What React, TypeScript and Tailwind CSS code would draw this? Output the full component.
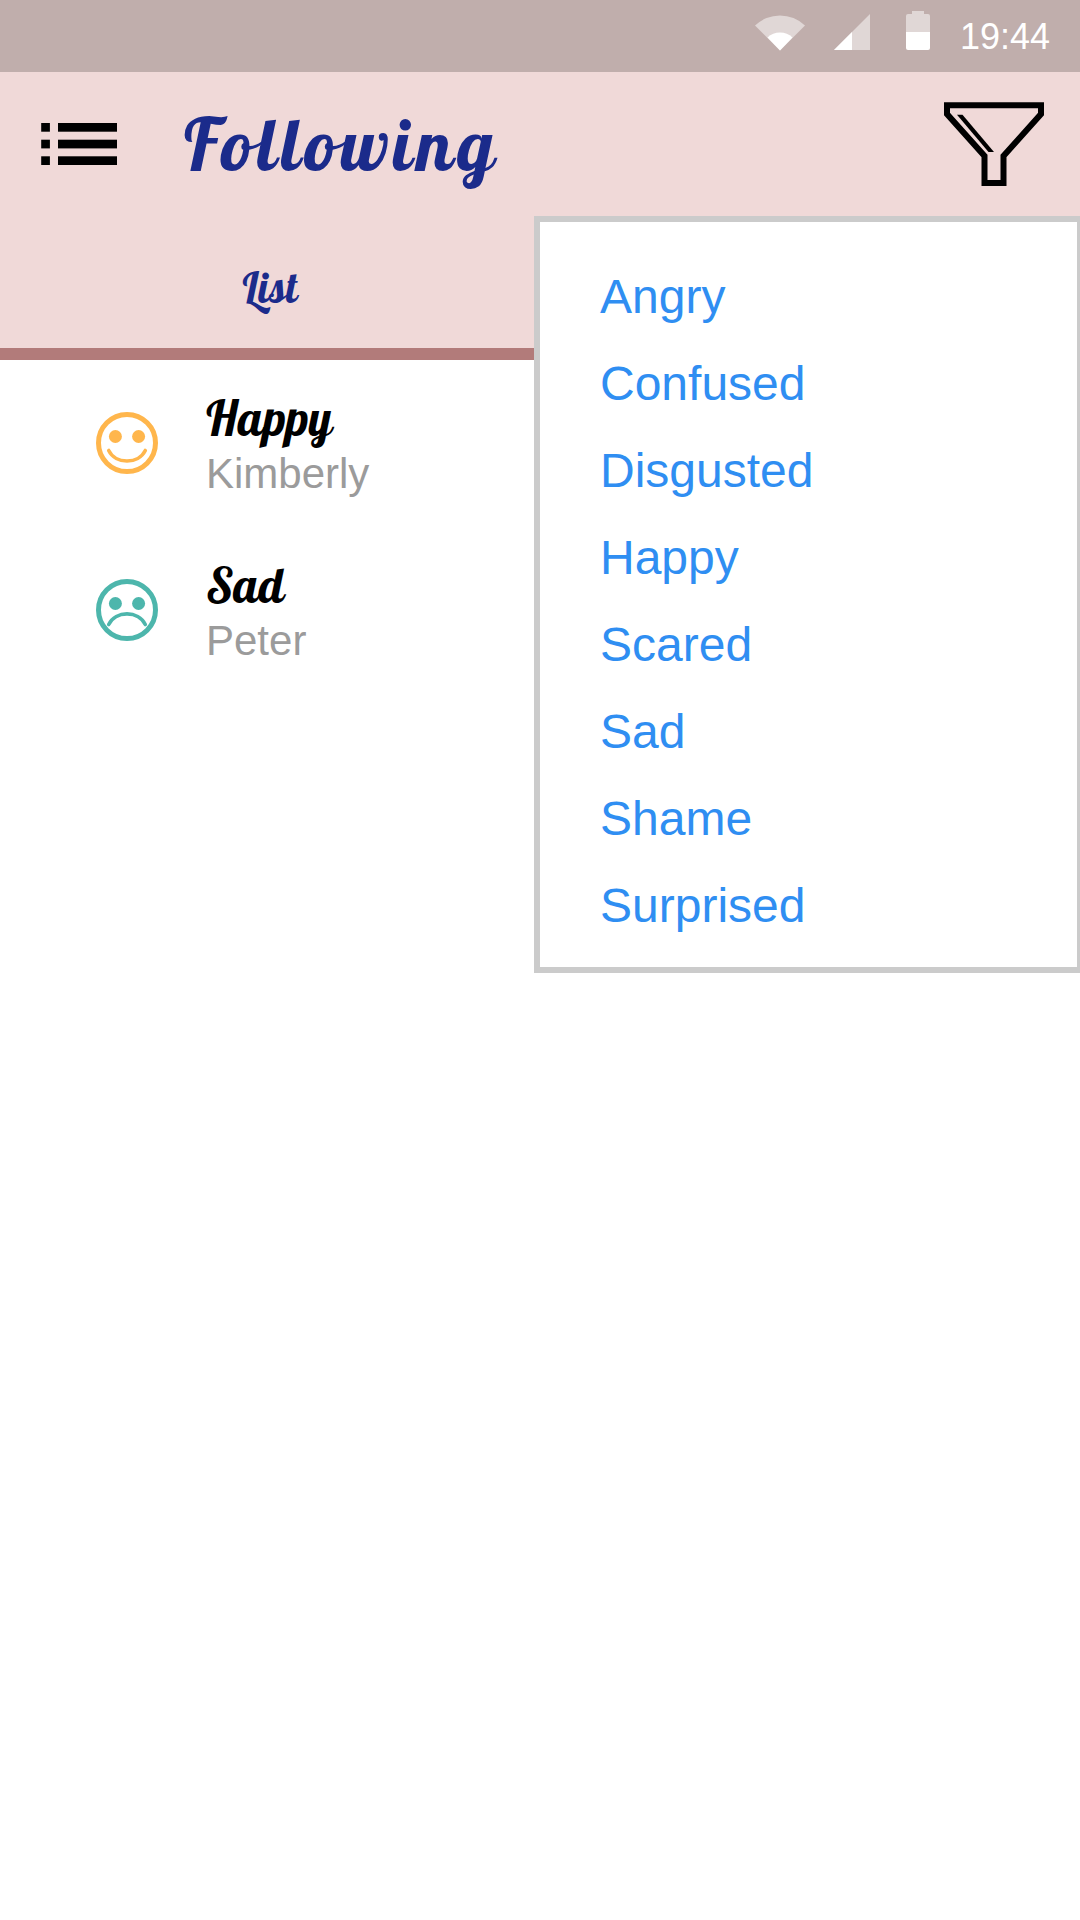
const SANS = "font-['Liberation_Sans',Arial,sans-serif]";
const SCRIPT = "font-[Lobster,'Liberation_Serif',serif] font-normal";

function StatusBar() {
  return (
    <div className="flex h-[72px] items-start bg-[#c0aeac] pl-[755px] text-white">
      <svg className="mt-[11px] h-[40px] w-[176px] shrink-0" viewBox="755 11 176 40" fill="#fff">
        <path d="M755 25.500A36 36 0 0 1 805 25.500L780 50.500z" opacity=".5" />
        <path d="M767.500 37.500A18 18 0 0 1 792.500 37.500L780 50.500z" />
        <path d="M834 50L870 14V50z" opacity=".5" />
        <path d="M834 50L852 32V50z" />
        <path d="M906 32V16q0-2 2-2h4v-3h12v3h4q2 0 2 2v16z" opacity=".5" />
        <path d="M906 32h24v16q0 2-2 2h-20q-2 0-2-2z" />
      </svg>
      <span className="ml-[29px] mt-[17px] text-[36px] leading-[40px]">19:44</span>
    </div>
  );
}

function ListIcon() {
  return (
    <svg className="h-[42px] w-[77px]" viewBox="41 123 77 42">
      {[123, 139.7, 156.3].map((y) => (
        <g key={y}>
          <rect x="41.200" y={y} width="8.700" height="8.700" />
          <rect x="58" y={y} width="59" height="8.700" />
        </g>
      ))}
    </svg>
  );
}

function FunnelIcon() {
  return (
    <svg className="h-[84px] w-[100px]" viewBox="944 102 100 84">
      <path
        d="M947 105.300H1041V114L1003.500 156V183H984.500V156L947 114z"
        fill="none"
        stroke="#000"
        strokeWidth="6"
      />
      <path d="M957 114.700h5.500L994 152h-5.500z" />
    </svg>
  );
}

function Face({ happy }: { happy: boolean }) {
  const color = happy ? "#ffb64c" : "#4db6ac";
  return (
    <svg className="mb-px h-[62px] w-[62px] shrink-0" viewBox="-31 -31 62 62" fill="none" stroke={color}>
      <circle r="28.500" strokeWidth="5" />
      <circle cx="-11.600" cy="-6.500" r="6.500" fill={color} stroke="none" />
      <circle cx="11.600" cy="-6.500" r="6.500" fill={color} stroke="none" />
      <path
        d={happy ? "M-18.300 7.500C-11.500 21.500 11.500 21.500 18.300 7.500" : "M-18.300 14.500C-11.500 .300 11.500 .300 18.300 14.500"}
        strokeWidth="3.600"
        strokeLinecap="round"
      />
    </svg>
  );
}

const people = [
  { mood: "Happy", name: "Kimberly", happy: true },
  { mood: "Sad", name: "Peter", happy: false },
];

const moods = ["Angry", "Confused", "Disgusted", "Happy", "Scared", "Sad", "Shame", "Surprised"];

export default function App() {
  return (
    <div className={`relative h-[1920px] w-[1080px] overflow-hidden bg-white ${SANS}`}>
      <StatusBar />
      <header className="bg-[#f0d9d8]">
        <div className="flex h-[144px] items-center pl-[41px] pr-[36px]">
          <button aria-label="Menu"><ListIcon /></button>
          <h1 className={`ml-[66px] text-[72px] leading-[100px] tracking-[4.5px] text-[#1b2b8b] ${SCRIPT}`}>Following</h1>
          <button className="ml-auto" aria-label="Filter"><FunnelIcon /></button>
        </div>
        <div className="flex h-[144px] border-b-[12px] border-[#b27b7a]">
          <div className="flex w-[540px] items-center justify-center">
            <span className={`mt-[10px] text-[42px] tracking-[0.2px] text-[#1b2b8b] ${SCRIPT}`}>List</span>
          </div>
        </div>
      </header>

      <main>
        {people.map((p) => (
          <div key={p.name} className="flex h-[167px] items-center pl-[96px]">
            <Face happy={p.happy} />
            <div className="ml-[48px]">
              <div className={`relative -top-[1.5px] text-[48px] leading-[56px] tracking-[0.2px] text-black ${SCRIPT}`}>{p.mood}</div>
              <div className="relative top-[2px] text-[42px] leading-[48px] text-[#9b9b9b]">{p.name}</div>
            </div>
          </div>
        ))}
      </main>

      <div className="absolute left-[534px] top-[216px] h-[757px] w-[549px] border-[6px] border-[#cbcbcb] bg-white pl-[60px] pt-[31px]">
        {moods.map((m) => (
          <div key={m} className="h-[87px] text-[48px] leading-[87px] text-[#2f8ef2]">{m}</div>
        ))}
      </div>
    </div>
  );
}
